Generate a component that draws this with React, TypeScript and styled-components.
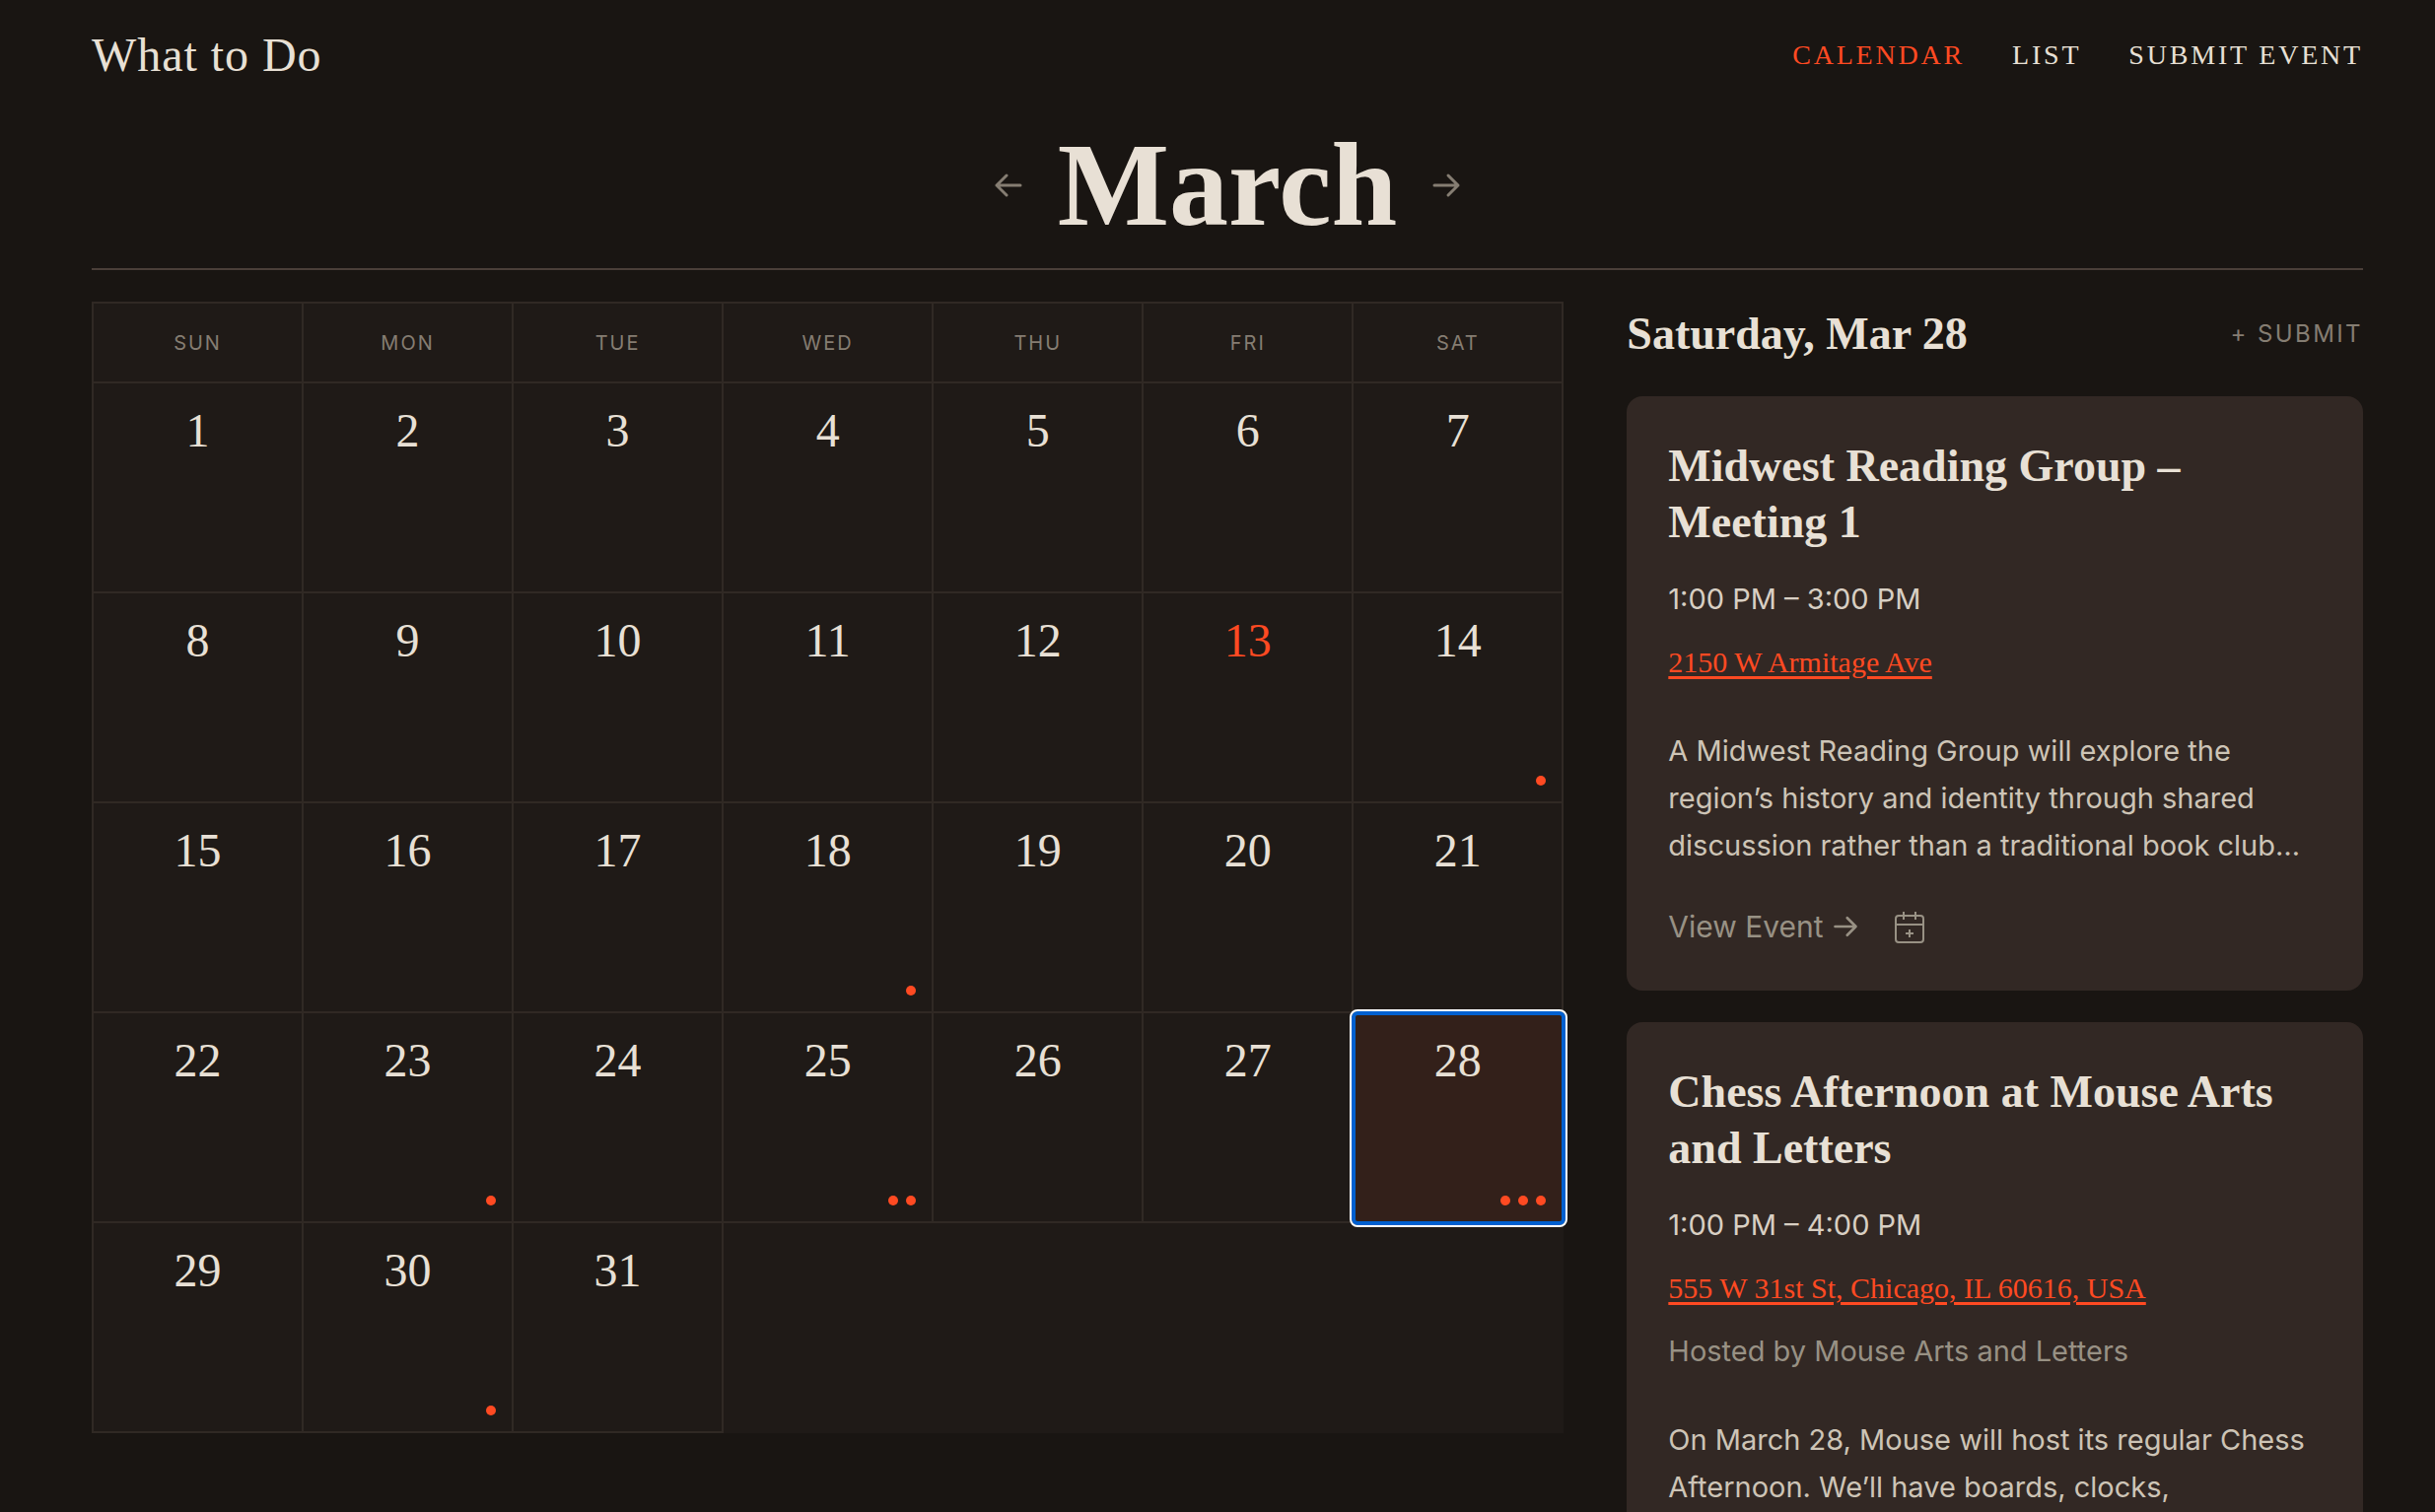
import React from "react";
import styled, { createGlobalStyle, css } from "styled-components";

const color = {
  page: "#191512",
  surface: "#1f1a17",
  card: "#322824",
  line: "#302924",
  rule: "#4a3f39",
  text: "#e8e0d5",
  body: "#cdc4b6",
  muted: "#989184",
  dim: "#857d72",
  accent: "#ff4a22",
  selected: "#33201a",
};

const serif = `"Liberation Serif", "Times New Roman", serif`;
const sans = `Inter, "Liberation Sans", sans-serif`;

const GlobalStyle = createGlobalStyle`
  *, *::before, *::after { box-sizing: border-box; }
  html { scrollbar-width: none; }
  body {
    margin: 0;
    background: ${color.page};
    color: ${color.text};
    font-family: ${sans};
  }
  h1, h2, h3, p { margin: 0; }
  button { border: 0; padding: 0; background: none; color: inherit; font: inherit; cursor: pointer; }
  a { color: inherit; text-decoration: none; }
`;

const Page = styled.div`
  min-height: 100vh;
  padding: 28px 73px 32px 93px;
`;

const TopBar = styled.header`
  display: flex;
  align-items: center;
  justify-content: space-between;
`;

const Brand = styled.a`
  font: 48px/56px ${serif};
  letter-spacing: 0.02em;
`;

const Nav = styled.nav`
  display: flex;
  gap: 48px;
`;

const NavLink = styled.a<{ $active?: boolean }>`
  font: 28px/32px ${serif};
  letter-spacing: 0.1em;
  text-transform: uppercase;
  color: ${(p) => (p.$active ? color.accent : color.text)};
`;

const MonthBar = styled.div`
  display: flex;
  align-items: center;
  justify-content: center;
  gap: 34px;
  margin-top: 44px;
  padding-bottom: 24px;
  border-bottom: 2px solid ${color.rule};
`;

const MonthName = styled.h1`
  font: bold 120px/120px ${serif};
`;

const MonthButton = styled.button`
  display: flex;
  color: ${color.dim};
`;

const Columns = styled.main`
  display: grid;
  grid-template-columns: 2fr 1fr;
  gap: 64px;
  align-items: start;
  margin-top: 32px;
`;

const Month = styled.table`
  width: 100%;
  table-layout: fixed;
  border-collapse: collapse;
  background: ${color.surface};
`;

const Weekday = styled.th`
  height: 81px;
  padding: 0;
  border: 2px solid ${color.line};
  color: ${color.dim};
  font: 20px/24px ${sans};
  letter-spacing: 0.1em;
  text-transform: uppercase;
`;

const DayCell = styled.td<{ $empty?: boolean }>`
  height: 213px;
  padding: 0;
  ${(p) => !p.$empty && css`border: 2px solid ${color.line};`}
`;

const Day = styled.button<{ $today?: boolean; $selected?: boolean }>`
  position: relative;
  display: flex;
  flex-direction: column;
  align-items: center;
  justify-content: space-between;
  width: 100%;
  height: 211px;
  padding: 24px 16px 16px;
  font: 48px/48px ${serif};
  color: ${(p) => (p.$today ? color.accent : color.text)};

  ${(p) =>
    p.$selected &&
    css`
      background: ${color.selected};

      &::after {
        content: "";
        position: absolute;
        inset: -4px -6px -6px -4px;
        border: 2px solid #fff;
        border-radius: 8px;
        box-shadow: inset 0 0 0 4px #0060d0;
      }
    `}
`;

const Dots = styled.span`
  display: flex;
  gap: 8px;
  align-self: flex-end;
`;

const Dot = styled.span`
  width: 10px;
  height: 10px;
  border-radius: 50%;
  background: ${color.accent};
`;

const SideHeader = styled.div`
  display: flex;
  align-items: center;
  justify-content: space-between;
  height: 66px;
  margin-bottom: 30px;
`;

const SideTitle = styled.h2`
  font: bold 46px/56px ${serif};
`;

const SubmitLink = styled.a`
  font: 24px/32px ${sans};
  letter-spacing: 0.1em;
  text-transform: uppercase;
  color: ${color.dim};
`;

const CardList = styled.div`
  display: flex;
  flex-direction: column;
  gap: 32px;
`;

const Card = styled.article`
  padding: 42px;
  border-radius: 16px;
  background: ${color.card};
`;

const CardTitle = styled.h3`
  font: bold 46px/57px ${serif};
`;

const Facts = styled.div`
  display: flex;
  flex-direction: column;
  align-items: flex-start;
  gap: 16px;
  margin-top: 26px;
  font-size: 29px;
  line-height: 48px;
`;

const Time = styled.p`
  color: #d8cfc3;
`;

const Place = styled.a`
  font-family: ${serif};
  font-size: 30px;
  color: ${color.accent};
  text-decoration: underline;
  text-decoration-thickness: 3px;
  text-underline-offset: 4px;
`;

const Host = styled.p`
  color: ${color.muted};
`;

const Description = styled.p`
  min-height: 144px;
  margin-top: 42px;
  font-size: 29px;
  line-height: 48px;
  color: ${color.body};
`;

const Actions = styled.div`
  display: flex;
  align-items: center;
  gap: 35px;
  height: 46px;
  margin-top: 35px;
  color: ${color.muted};
`;

const ViewLink = styled.a`
  display: flex;
  align-items: center;
  gap: 8px;
  font-size: 30px;
  line-height: 46px;
`;

const IconButton = styled.button`
  display: flex;
`;

function Arrow({ size, flip }: { size: number; flip?: boolean }) {
  return (
    <svg
      width={size}
      height={size}
      viewBox="0 0 32 32"
      fill="none"
      stroke="currentColor"
      strokeWidth="3"
      strokeLinecap="round"
      strokeLinejoin="round"
      aria-hidden="true"
    >
      <path d={flip ? "M28 16H4M14 6L4 16L14 26" : "M4 16H28M18 6L28 16L18 26"} />
    </svg>
  );
}

function CalendarPlus() {
  return (
    <svg width="32" height="34" viewBox="0 0 32 34" fill="none" stroke="currentColor" strokeWidth="2" aria-hidden="true">
      <rect x="2" y="6" width="28" height="27" rx="3" />
      <path d="M2 15H30M10 2V10M22 2V10M16 20V28M12 24H20" />
    </svg>
  );
}

const weekdays = ["Sun", "Mon", "Tue", "Wed", "Thu", "Fri", "Sat"];
const weeks = Array.from({ length: 5 }, (_, w) =>
  weekdays.map((_, d) => (w * 7 + d + 1 <= 31 ? w * 7 + d + 1 : null)),
);
const eventCounts: Record<number, number> = { 14: 1, 18: 1, 23: 1, 25: 2, 28: 3, 30: 1 };
const today = 13;
const selectedDay = 28;

interface EventInfo {
  title: string;
  time: string;
  place: string;
  host?: string;
  description: string;
}

const events: EventInfo[] = [
  {
    title: "Midwest Reading Group – Meeting 1",
    time: "1:00 PM – 3:00 PM",
    place: "2150 W Armitage Ave",
    description:
      "A Midwest Reading Group will explore the region’s history and identity through shared discussion rather than a traditional book club…",
  },
  {
    title: "Chess Afternoon at Mouse Arts and Letters",
    time: "1:00 PM – 4:00 PM",
    place: "555 W 31st St, Chicago, IL 60616, USA",
    host: "Hosted by Mouse Arts and Letters",
    description: "On March 28, Mouse will host its regular Chess Afternoon. We’ll have boards, clocks,",
  },
];

function EventCard({ event }: { event: EventInfo }) {
  return (
    <Card>
      <CardTitle>{event.title}</CardTitle>
      <Facts>
        <Time>{event.time}</Time>
        <Place href="#map">{event.place}</Place>
        {event.host && <Host>{event.host}</Host>}
      </Facts>
      <Description>{event.description}</Description>
      <Actions>
        <ViewLink href="#event">
          View Event
          <Arrow size={28} />
        </ViewLink>
        <IconButton type="button" aria-label="Add to calendar">
          <CalendarPlus />
        </IconButton>
      </Actions>
    </Card>
  );
}

export default function App() {
  return (
    <Page>
      <GlobalStyle />
      <TopBar>
        <Brand href="#home">What to Do</Brand>
        <Nav>
          <NavLink href="#calendar" $active>Calendar</NavLink>
          <NavLink href="#list">List</NavLink>
          <NavLink href="#submit">Submit Event</NavLink>
        </Nav>
      </TopBar>
      <MonthBar>
        <MonthButton type="button" aria-label="Previous month">
          <Arrow size={32} flip />
        </MonthButton>
        <MonthName>March</MonthName>
        <MonthButton type="button" aria-label="Next month">
          <Arrow size={32} />
        </MonthButton>
      </MonthBar>
      <Columns>
        <Month>
          <thead>
            <tr>
              {weekdays.map((name) => (
                <Weekday key={name} scope="col">{name}</Weekday>
              ))}
            </tr>
          </thead>
          <tbody>
            {weeks.map((week, w) => (
              <tr key={w}>
                {week.map((day, d) => (
                  <DayCell key={d} $empty={day === null}>
                    {day !== null && (
                      <Day type="button" $today={day === today} $selected={day === selectedDay}>
                        {day}
                        <Dots>
                          {Array.from({ length: eventCounts[day] ?? 0 }, (_, i) => (
                            <Dot key={i} />
                          ))}
                        </Dots>
                      </Day>
                    )}
                  </DayCell>
                ))}
              </tr>
            ))}
          </tbody>
        </Month>
        <section>
          <SideHeader>
            <SideTitle>Saturday, Mar 28</SideTitle>
            <SubmitLink href="#submit">+ Submit</SubmitLink>
          </SideHeader>
          <CardList>
            {events.map((event) => (
              <EventCard key={event.title} event={event} />
            ))}
          </CardList>
        </section>
      </Columns>
    </Page>
  );
}
